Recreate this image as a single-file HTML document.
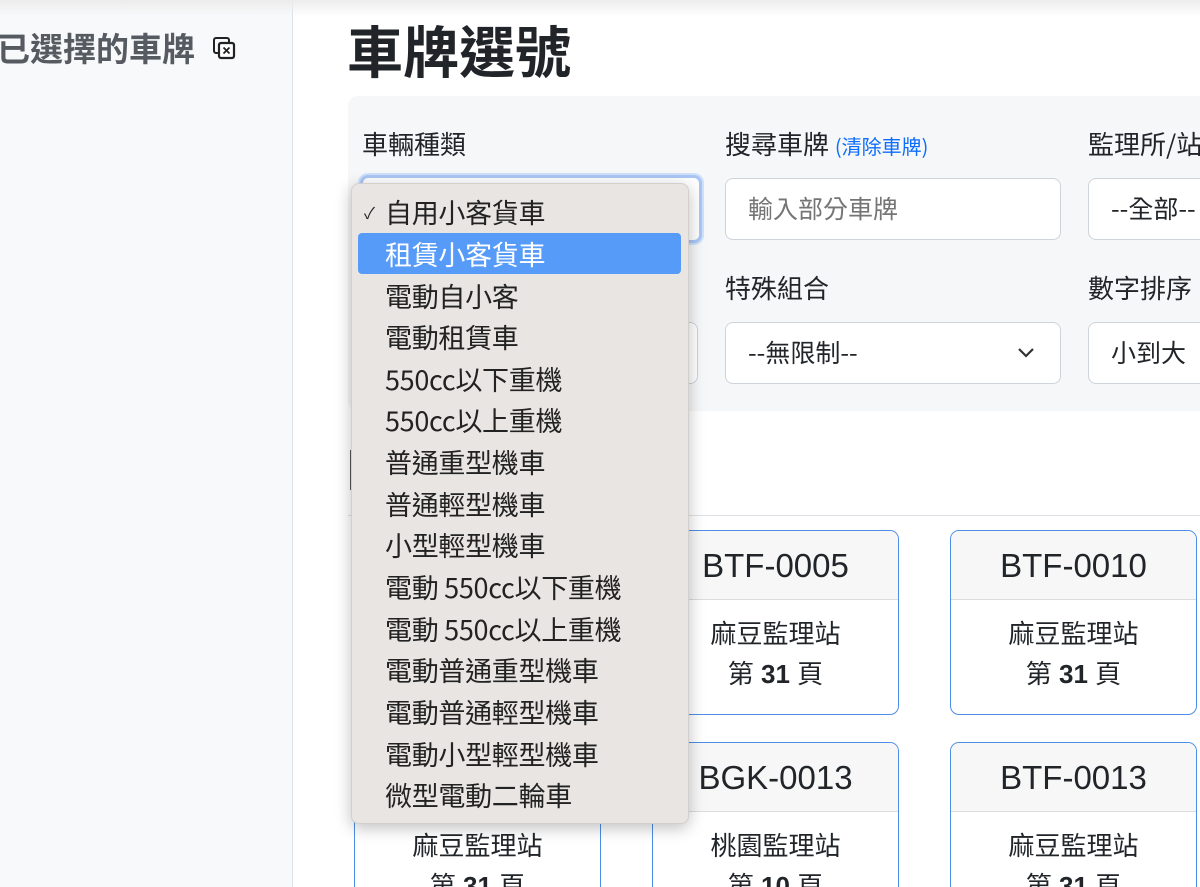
<!DOCTYPE html>
<html style="width:1200px;height:887px;overflow:hidden"><head><meta charset="utf-8"><style>
*{box-sizing:border-box;margin:0;padding:0}
body{width:1200px;height:887px;overflow:hidden;background:#fff;font-family:"Liberation Sans","Noto Sans CJK TC",sans-serif;color:#212529;position:relative}
.a{position:absolute}
.side{left:0;top:0;width:293px;height:887px;background:#f8f9fa;border-right:1px solid #dee2e6}
.topsh{left:0;top:0;width:1200px;height:16px;background:linear-gradient(#ececec,rgba(255,255,255,0))}
.lbl{font-size:26px;color:#212529;white-space:nowrap;font-family:"Noto Sans CJK TC",sans-serif;line-height:30px}
.inp{height:62px;border:1px solid #ced4da;border-radius:8px;background:#fff;font-size:25px;padding:0 22px;line-height:58px;white-space:nowrap;overflow:hidden;font-family:"Noto Sans CJK TC",sans-serif}
.card{width:247px;height:185px;border:1px solid #4d8ee8;border-radius:9px;overflow:hidden;background:#fff;text-align:center}
.card .h{height:69px;background:#f7f7f7;border-bottom:1px solid #dcdcdc;font-size:33px;line-height:70px}
.card .b{font-size:26px;line-height:40px;padding-top:14px}
.dd{left:351px;top:183px;width:338px;height:641px;background:#e9e5e3;border-radius:8px;box-shadow:0 4px 16px rgba(0,0,0,.25);border:1px solid #d3cfcd}
.it{position:absolute;left:33px;font-size:27px;color:#222;white-space:nowrap;line-height:41px;font-family:"Noto Sans CJK TC",sans-serif;letter-spacing:-0.3px}
</style></head><body>
<div class="a side"></div>
<div class="a topsh"></div>
<div class="a" style="left:-3px;top:25px;font-size:33px;font-weight:bold;color:#555b61;white-space:nowrap;font-family:'Noto Sans CJK TC',sans-serif;line-height:44px">已選擇的車牌</div>
<svg class="a" style="left:212px;top:36px" width="25" height="25" viewBox="0 0 25 25"><rect x="2" y="2" width="15" height="15" rx="2" fill="none" stroke="#222" stroke-width="2"/><rect x="7" y="7" width="15" height="15" rx="2" fill="#fff" stroke="#222" stroke-width="2.2"/><path d="M11.5 11.5l6 6M17.5 11.5l-6 6" stroke="#222" stroke-width="1.8"/></svg>
<div class="a" style="left:347px;top:14px;font-size:56px;font-weight:bold;color:#212529;white-space:nowrap;font-family:'Noto Sans CJK TC',sans-serif;line-height:72px">車牌選號</div>
<div class="a" style="left:348px;top:96px;width:900px;height:315px;background:#f6f7f9;border-radius:10px"></div>
<div class="a lbl" style="left:362px;top:129px">車輛種類</div>
<div class="a lbl" style="left:725px;top:129px">搜尋車牌 <span style="color:#0d6efd;font-size:20px">(清除車牌)</span></div>
<div class="a lbl" style="left:1088px;top:129px">監理所/站</div>
<div class="a inp" style="left:360px;top:175px;width:342px;height:68px;border:3px solid #a9c6f5;box-shadow:0 0 0 2px #cfe0fb"></div>
<div class="a inp" style="left:725px;top:178px;width:336px;color:#757575">輸入部分車牌</div>
<div class="a inp" style="left:1088px;top:178px;width:200px">--全部--</div>
<div class="a lbl" style="left:725px;top:273px">特殊組合</div>
<div class="a lbl" style="left:1088px;top:273px">數字排序</div>
<div class="a inp" style="left:362px;top:322px;width:336px"></div>
<div class="a inp" style="left:725px;top:322px;width:336px">--無限制--</div>
<svg class="a" style="left:1016px;top:346px" width="20" height="14"><path d="M3 3l7 7 7-7" fill="none" stroke="#333" stroke-width="2.2"/></svg>
<div class="a inp" style="left:1088px;top:322px;width:200px">小到大</div>
<div class="a" style="left:348px;top:515px;width:852px;height:1px;background:#dee2e6"></div>
<div class="a" style="left:350px;top:450px;width:2px;height:40px;background:#555"></div>

<div class="a card" style="left:354px;top:530px"><div class="h">BTF-0001</div><div class="b">麻豆監理站<br>第 <b>31</b> 頁</div></div>
<div class="a card" style="left:652px;top:530px"><div class="h">BTF-0005</div><div class="b">麻豆監理站<br>第 <b>31</b> 頁</div></div>
<div class="a card" style="left:950px;top:530px"><div class="h">BTF-0010</div><div class="b">麻豆監理站<br>第 <b>31</b> 頁</div></div>
<div class="a card" style="left:354px;top:742px"><div class="h">BTF-0011</div><div class="b">麻豆監理站<br>第 <b>31</b> 頁</div></div>
<div class="a card" style="left:652px;top:742px"><div class="h">BGK-0013</div><div class="b">桃園監理站<br>第 <b>10</b> 頁</div></div>
<div class="a card" style="left:950px;top:742px"><div class="h">BTF-0013</div><div class="b">麻豆監理站<br>第 <b>31</b> 頁</div></div>

<div class="a dd">
<div class="a" style="left:6px;top:49px;width:323px;height:41px;background:#579bf9;border-radius:4px"></div>
<div class="it" style="left:12px;top:8px;font-size:16px">✓</div>
<div class="it" style="top:7px">自用小客貨車</div>
<div class="it" style="top:49px;color:#fff">租賃小客貨車</div>
<div class="it" style="top:91px">電動自小客</div>
<div class="it" style="top:132px">電動租賃車</div>
<div class="it" style="top:174px">550cc以下重機</div>
<div class="it" style="top:215px">550cc以上重機</div>
<div class="it" style="top:257px">普通重型機車</div>
<div class="it" style="top:299px">普通輕型機車</div>
<div class="it" style="top:340px">小型輕型機車</div>
<div class="it" style="top:382px">電動 550cc以下重機</div>
<div class="it" style="top:424px">電動 550cc以上重機</div>
<div class="it" style="top:465px">電動普通重型機車</div>
<div class="it" style="top:507px">電動普通輕型機車</div>
<div class="it" style="top:549px">電動小型輕型機車</div>
<div class="it" style="top:590px">微型電動二輪車</div>
</div>
</body></html>
